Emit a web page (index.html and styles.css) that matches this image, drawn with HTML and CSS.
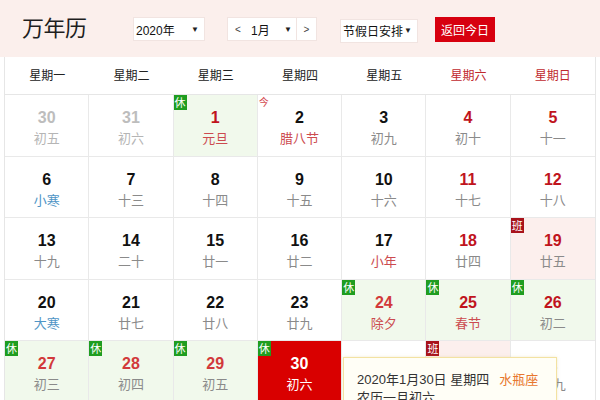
FILE: index.html
```html
<!DOCTYPE html>
<html lang="zh-CN">
<head>
<meta charset="utf-8">
<title>万年历</title>
<link rel="stylesheet" href="styles.css">
</head>
<body>
<div class="page">
  <div class="header">
    <div class="title">万年历</div>
    <div class="sel sel-year"><span>2020年</span><span class="arr">▼</span></div>
    <div class="month-group">
      <div class="mbtn">&lt;</div>
      <div class="msel"><span>1月</span><span class="arr">▼</span></div>
      <div class="mbtn mbtn-next">&gt;</div>
    </div>
    <div class="sel sel-hol"><span>节假日安排</span><span class="arr">▼</span></div>
    <div class="today-btn">返回今日</div>
  </div>

  <div class="cal">
    <div class="weekdays">
      <div class="wd">星期一</div>
      <div class="wd">星期二</div>
      <div class="wd">星期三</div>
      <div class="wd">星期四</div>
      <div class="wd">星期五</div>
      <div class="wd wknd">星期六</div>
      <div class="wd wknd">星期日</div>
    </div>
    <div class="grid">
      <div class="cell other"><div class="num">30</div><div class="lunar">初五</div></div>
      <div class="cell other"><div class="num">31</div><div class="lunar">初六</div></div>
      <div class="cell rest"><span class="badge b-rest">休</span><div class="num red">1</div><div class="lunar fest">元旦</div></div>
      <div class="cell"><span class="jin">今</span><div class="num">2</div><div class="lunar fest">腊八节</div></div>
      <div class="cell"><div class="num">3</div><div class="lunar">初九</div></div>
      <div class="cell"><div class="num red">4</div><div class="lunar">初十</div></div>
      <div class="cell"><div class="num red">5</div><div class="lunar">十一</div></div>

      <div class="cell"><div class="num">6</div><div class="lunar term">小寒</div></div>
      <div class="cell"><div class="num">7</div><div class="lunar">十三</div></div>
      <div class="cell"><div class="num">8</div><div class="lunar">十四</div></div>
      <div class="cell"><div class="num">9</div><div class="lunar">十五</div></div>
      <div class="cell"><div class="num">10</div><div class="lunar">十六</div></div>
      <div class="cell"><div class="num red">11</div><div class="lunar">十七</div></div>
      <div class="cell"><div class="num red">12</div><div class="lunar">十八</div></div>

      <div class="cell"><div class="num">13</div><div class="lunar">十九</div></div>
      <div class="cell"><div class="num">14</div><div class="lunar">二十</div></div>
      <div class="cell"><div class="num">15</div><div class="lunar">廿一</div></div>
      <div class="cell"><div class="num">16</div><div class="lunar">廿二</div></div>
      <div class="cell"><div class="num">17</div><div class="lunar fest">小年</div></div>
      <div class="cell"><div class="num red">18</div><div class="lunar">廿四</div></div>
      <div class="cell work"><span class="badge b-work">班</span><div class="num red">19</div><div class="lunar">廿五</div></div>

      <div class="cell"><div class="num">20</div><div class="lunar term">大寒</div></div>
      <div class="cell"><div class="num">21</div><div class="lunar">廿七</div></div>
      <div class="cell"><div class="num">22</div><div class="lunar">廿八</div></div>
      <div class="cell"><div class="num">23</div><div class="lunar">廿九</div></div>
      <div class="cell rest"><span class="badge b-rest">休</span><div class="num hred">24</div><div class="lunar fest">除夕</div></div>
      <div class="cell rest"><span class="badge b-rest">休</span><div class="num red">25</div><div class="lunar fest">春节</div></div>
      <div class="cell rest"><span class="badge b-rest">休</span><div class="num red">26</div><div class="lunar">初二</div></div>

      <div class="cell rest"><span class="badge b-rest">休</span><div class="num hred">27</div><div class="lunar">初三</div></div>
      <div class="cell rest"><span class="badge b-rest">休</span><div class="num hred">28</div><div class="lunar">初四</div></div>
      <div class="cell rest"><span class="badge b-rest">休</span><div class="num hred">29</div><div class="lunar">初五</div></div>
      <div class="cell today"><span class="badge b-rest">休</span><div class="num">30</div><div class="lunar">初六</div></div>
      <div class="cell"><div class="num">31</div><div class="lunar">初七</div></div>
      <div class="cell work"><span class="badge b-work">班</span><div class="num">1</div><div class="lunar">初八</div></div>
      <div class="cell"><div class="num red">2</div><div class="lunar">初九</div></div>
    </div>

    <div class="tip">
      <div class="tip-line">2020年1月30日 星期四<span class="star">水瓶座</span></div>
      <div class="tip-line">农历一月初六</div>
    </div>
  </div>
</div>
</body>
</html>
```

FILE: styles.css
```css
* { box-sizing: border-box; }
html, body {
  margin: 0;
  padding: 0;
  background: #fff;
  overflow: hidden;
}
body {
  font-family: "Liberation Sans", "Noto Sans CJK SC", sans-serif;
  color: #222;
  width: 600px;
  height: 400px;
}
.page {
  width: 600px;
}
.header {
  height: 57px;
  background: #fbefec;
  display: flex;
  align-items: center;
  padding-left: 22px;
  padding-top: 1px;
}
.title {
  font-family: "Noto Sans CJK SC", sans-serif;
  font-size: 22px;
  color: #1e1e1e;
  width: 111px;
  margin-top: -6px;
  letter-spacing: -0.5px;
}
.sel {
  height: 24px;
  background: #fff;
  border: 1px solid #f1e4e1;
  display: flex;
  align-items: center;
  justify-content: space-between;
  font-size: 12px;
  color: #111;
  padding: 0 5px 0 2px;
  white-space: nowrap;
}
.sel span { font-family: "Liberation Sans", "Noto Sans CJK SC", sans-serif; }
.arr {
  font-size: 8px;
  color: #222;
}
.sel-year {
  width: 72px;
  padding-left: 2px;
}
.month-group {
  margin-left: 22px;
  display: flex;
  height: 24px;
  background: #fff;
  border: 1px solid #f1e4e1;
  font-size: 12px;
}
.mbtn {
  width: 20px;
  display: flex;
  align-items: center;
  justify-content: center;
  font-size: 10px;
  color: #444;
}
.mbtn-next {
  border-left: 1px solid #f1e4e1;
}
.msel {
  width: 48px;
  display: flex;
  align-items: center;
  justify-content: space-between;
  padding: 0 4px 0 3px;
  color: #111;
}
.sel-hol {
  margin-left: 23px;
  width: 78px;
  margin-top: 3px;
  padding: 0 5px 0 2px;
}
.sel-hol span:first-child {
  font-family: "Noto Sans CJK SC", sans-serif;
}
.today-btn {
  margin-left: 17px;
  width: 60px;
  height: 25px;
  background: #d7000f;
  color: #fff;
  font-family: "Noto Sans CJK SC", sans-serif;
  font-size: 12px;
  display: flex;
  align-items: center;
  justify-content: center;
}

.cal {
  position: relative;
  margin-left: 4px;
  width: 592px;
  border-left: 1px solid #e6e6e6;
  border-right: 1px solid #e6e6e6;
}
.weekdays {
  display: grid;
  grid-template-columns: repeat(7, 1fr);
  height: 38px;
  border-bottom: 1px solid #e6e6e6;
}
.wd {
  display: flex;
  align-items: center;
  justify-content: center;
  font-family: "Noto Sans CJK SC", sans-serif;
  font-size: 12px;
  color: #222;
  padding-bottom: 2px;
}
.wd.wknd { color: #c0282e; }

.grid {
  display: grid;
  grid-template-columns: repeat(7, 1fr);
  grid-auto-rows: 61.5px;
}
.cell {
  position: relative;
  border-right: 1px solid #e9e9e9;
  border-bottom: 1px solid #e9e9e9;
  text-align: center;
  padding-top: 12px;
  background: #fff;
}
.cell:nth-child(7n) { border-right: none; }
.num {
  font-family: "Liberation Sans", sans-serif;
  font-weight: bold;
  font-size: 16px;
  line-height: 21px;
  color: #111;
}
.lunar {
  font-family: "Noto Sans CJK SC", sans-serif;
  font-size: 13px;
  line-height: 20px;
  color: #8a8a8a;
}
.num.red { color: #c0141d; }
.num.hred { color: #d2393b; }
.lunar.fest { color: #cc4b4f; }
.lunar.term { color: #4f95c6; }
.other .num { color: #bdbdbd; }
.other .lunar { color: #b5b5b5; }

.rest { background: #f1f9ec; }
.work { background: #fcefed; }
.today { background: #d90000; }
.today .num, .today .lunar { color: #fff; }

.badge {
  position: absolute;
  left: 0;
  top: 0;
  width: 13px;
  height: 15px;
  font-family: "Noto Sans CJK SC", sans-serif;
  font-size: 11px;
  line-height: 15px;
  color: #fff;
  text-align: center;
}
.b-rest { background: #1f9d20; }
.b-work { background: #a8121b; }
.jin {
  position: absolute;
  left: 1px;
  top: 1px;
  font-family: "Noto Sans CJK SC", sans-serif;
  font-size: 10px;
  line-height: 12px;
  color: #d44a4f;
}

.tip {
  position: absolute;
  left: 338px;
  top: 300px;
  width: 214px;
  height: 80px;
  background: #fffef6;
  border: 1px solid #f3e2a2;
  box-shadow: 0 0 3px rgba(220, 200, 120, 0.35);
  padding: 13px 0 0 13px;
}
.tip-line {
  font-family: "Liberation Sans", "Noto Sans CJK SC", sans-serif;
  font-size: 13px;
  line-height: 18px;
  color: #333;
  white-space: nowrap;
}
.star {
  color: #e8772e;
  margin-left: 10px;
}
```
